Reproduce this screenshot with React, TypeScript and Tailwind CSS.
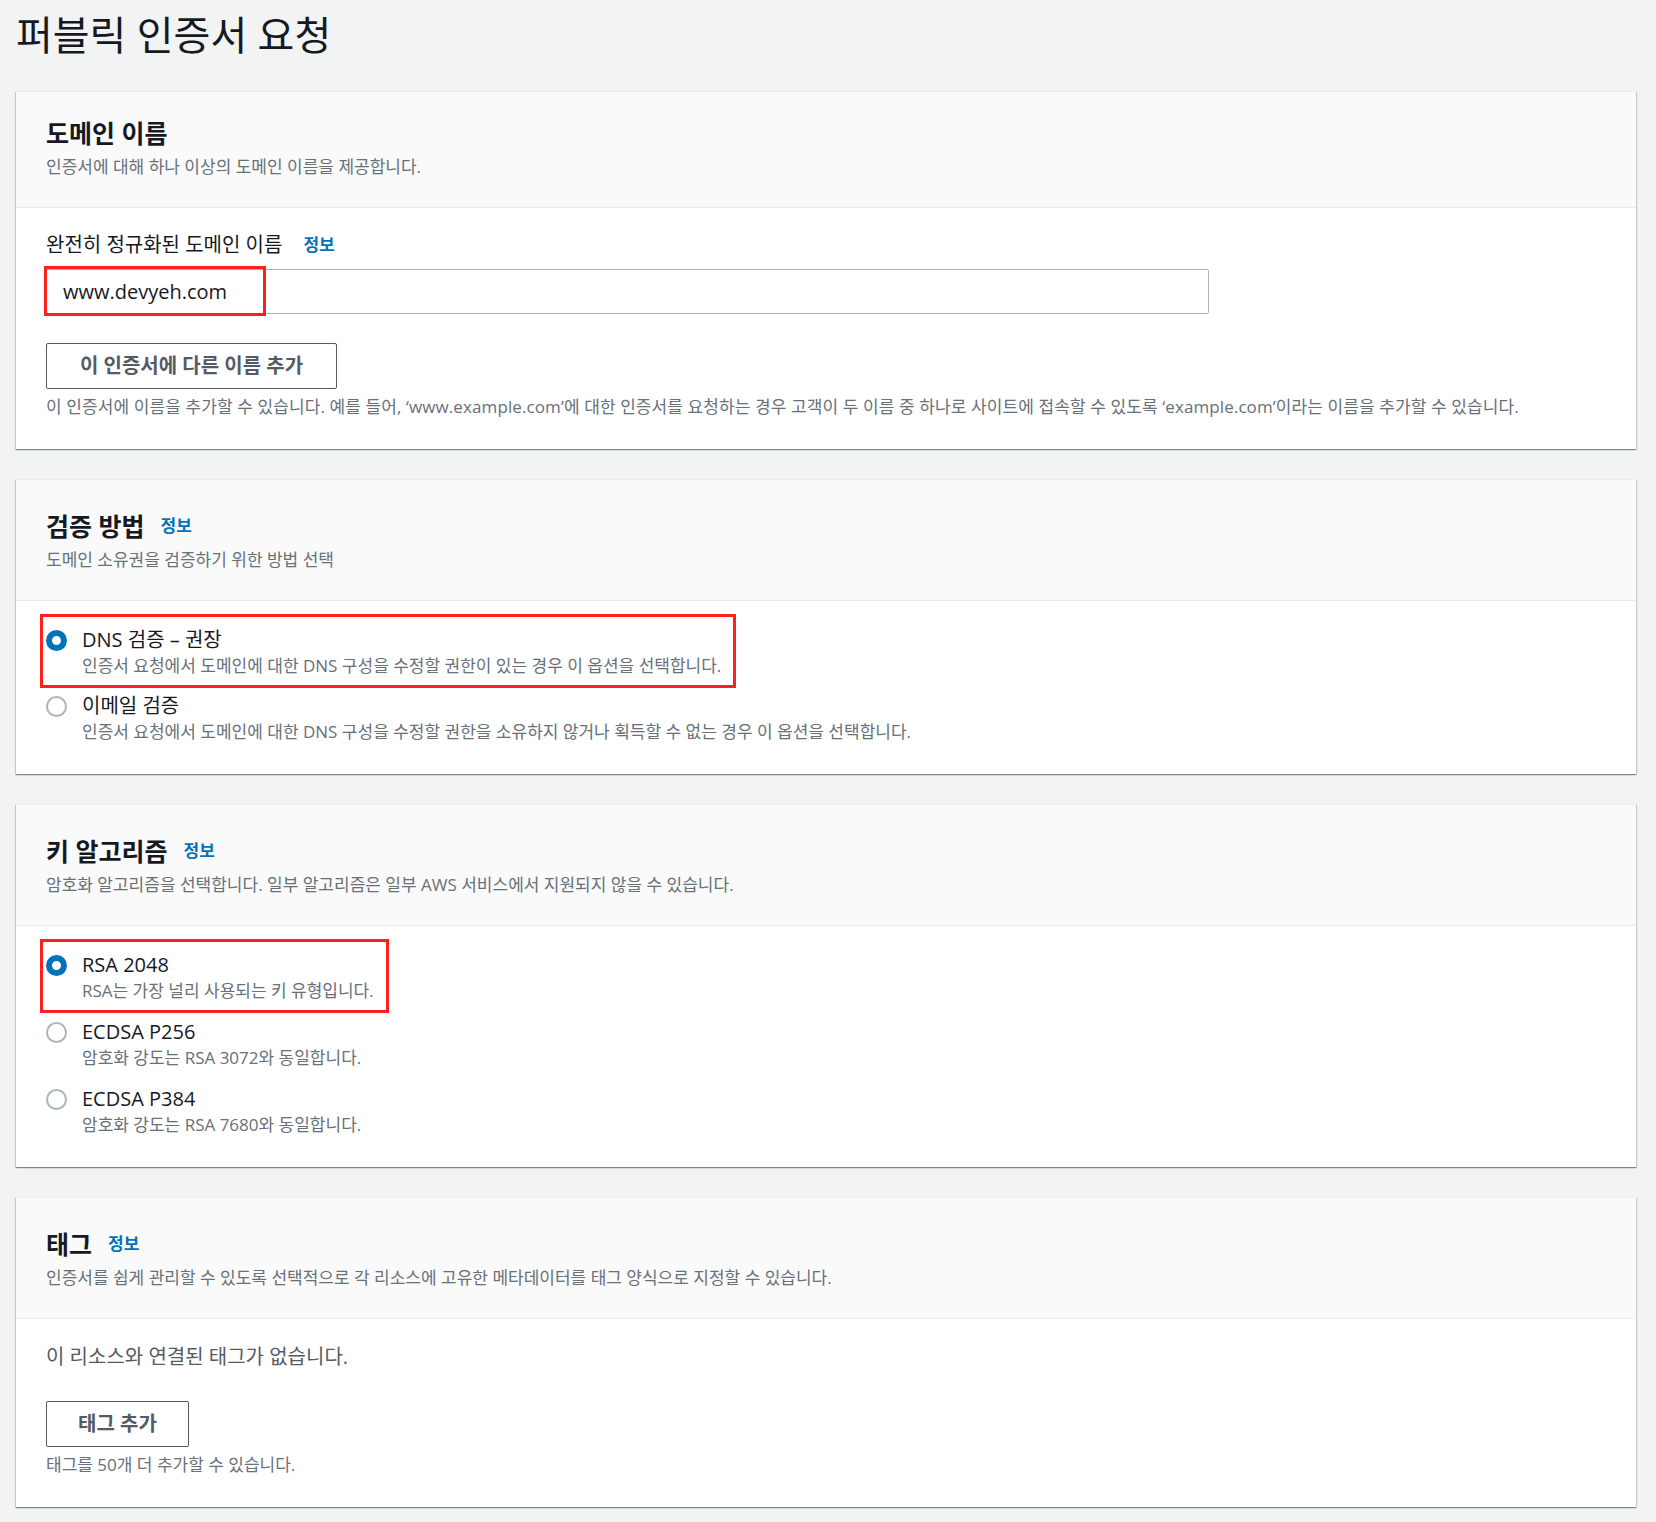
import React from 'react';

const font = "font-['Open_Sans','Noto_Sans_CJK_KR',sans-serif]";

const InfoLink: React.FC<{ gap?: string }> = ({ gap = 'ml-[16px]' }) => (
  <a className={`${gap} text-[17px] font-bold text-[#0073bb] align-middle`}>정보</a>
);

const Card: React.FC<{
  title: string;
  info?: boolean;
  desc: string;
  children: React.ReactNode;
}> = ({ title, info, desc, children }) => (
  <section className="bg-white border-t border-[#eaeded] shadow-[0_1px_1px_0_rgba(0,28,36,0.3),1px_1px_1px_0_rgba(0,28,36,0.15),-1px_1px_1px_0_rgba(0,28,36,0.15)]">
    <div className={`bg-[#fafafa] border-b border-[#eaeded] px-[30px] pb-[28px] ${info ? 'pt-[30px]' : 'pt-[25px]'}`}>
      <h2 className="flex items-center text-[25px] leading-[32px] font-bold text-[#16191f]">
        {title}
        {info && <InfoLink />}
      </h2>
      <p className="mt-[6px] text-[17px] leading-[24px] text-[#687078]">{desc}</p>
    </div>
    <div className="px-[30px] pt-[25px] pb-[30px]">{children}</div>
  </section>
);

const Radio: React.FC<{ label: string; desc: string; checked?: boolean; mark?: string }> = ({
  label,
  desc,
  checked,
  mark,
}) => (
  <div className="relative flex items-start">
    <span
      className={`mt-[4px] h-[21px] w-[21px] shrink-0 rounded-full bg-white ${
        checked ? 'border-[6px] border-[#0073bb]' : 'border-2 border-[#aab7b8]'
      }`}
    />
    <div className="ml-[15px]">
      <div className="text-[20px] leading-[28px] text-[#16191f]">{label}</div>
      <div className="text-[17px] leading-[24px] text-[#687078]">{desc}</div>
    </div>
    {mark && (
      <div className={`absolute -left-[6px] -top-[12px] h-[74px] border-[3px] border-[#ff1f1f] ${mark}`} />
    )}
  </div>
);

const App: React.FC = () => {
  return (
    <div className={`min-h-screen bg-[#f2f3f3] pl-4 pr-5 pt-[9px] pb-[14px] ${font}`}>
      <h1 className="text-[40px] leading-[52px] text-[#16191f]">퍼블릭 인증서 요청</h1>

      <div className="mt-[30px] flex flex-col gap-[30px]">
        <Card title="도메인 이름" desc="인증서에 대해 하나 이상의 도메인 이름을 제공합니다.">
          <div className="flex items-center text-[20px] leading-[24px] text-[#16191f]">
            완전히 정규화된 도메인 이름
            <InfoLink gap="ml-[21px]" />
          </div>
          <div className="relative mt-[12px] w-[1163px]">
            <div className="flex h-[45px] items-center rounded-[2px] border border-[#aab7b8] bg-white px-[16px] text-[20px] text-[#16191f]">
              www.devyeh.com
            </div>
            <div className="absolute -left-[2px] -top-[3px] h-[50px] w-[222px] border-[3px] border-[#ff1f1f]" />
          </div>
          <button className="mt-[29px] h-[46px] w-[291px] rounded-[2px] border border-[#545b64] bg-white text-[20px] font-bold text-[#545b64]">
            이 인증서에 다른 이름 추가
          </button>
          <p className="mt-[6px] text-[17px] leading-[24px] tracking-[0.1px] text-[#687078]">
            이 인증서에 이름을 추가할 수 있습니다. 예를 들어, ‘www.example.com’에 대한 인증서를 요청하는 경우 고객이 두 이름 중 하나로 사이트에 접속할 수 있도록 ‘example.com’이라는 이름을 추가할 수 있습니다.
          </p>
        </Card>

        <Card title="검증 방법" info desc="도메인 소유권을 검증하기 위한 방법 선택">
          <div className="flex flex-col gap-[14px]">
            <Radio
              checked
              mark="w-[696px]"
              label="DNS 검증 – 권장"
              desc="인증서 요청에서 도메인에 대한 DNS 구성을 수정할 권한이 있는 경우 이 옵션을 선택합니다."
            />
            <Radio
              label="이메일 검증"
              desc="인증서 요청에서 도메인에 대한 DNS 구성을 수정할 권한을 소유하지 않거나 획득할 수 없는 경우 이 옵션을 선택합니다."
            />
          </div>
        </Card>

        <Card
          title="키 알고리즘"
          info
          desc="암호화 알고리즘을 선택합니다. 일부 알고리즘은 일부 AWS 서비스에서 지원되지 않을 수 있습니다."
        >
          <div className="flex flex-col gap-[15px]">
            <Radio checked mark="w-[349px]" label="RSA 2048" desc="RSA는 가장 널리 사용되는 키 유형입니다." />
            <Radio label="ECDSA P256" desc="암호화 강도는 RSA 3072와 동일합니다." />
            <Radio label="ECDSA P384" desc="암호화 강도는 RSA 7680와 동일합니다." />
          </div>
        </Card>

        <Card
          title="태그"
          info
          desc="인증서를 쉽게 관리할 수 있도록 선택적으로 각 리소스에 고유한 메타데이터를 태그 양식으로 지정할 수 있습니다."
        >
          <p className="text-[20px] leading-[26px] text-[#545b64]">이 리소스와 연결된 태그가 없습니다.</p>
          <button className="mt-[31px] h-[46px] w-[143px] rounded-[2px] border border-[#545b64] bg-white text-[20px] font-bold text-[#545b64]">
            태그 추가
          </button>
          <p className="mt-[6px] text-[17px] leading-[24px] text-[#687078]">태그를 50개 더 추가할 수 있습니다.</p>
        </Card>
      </div>
    </div>
  );
};

export default App;
